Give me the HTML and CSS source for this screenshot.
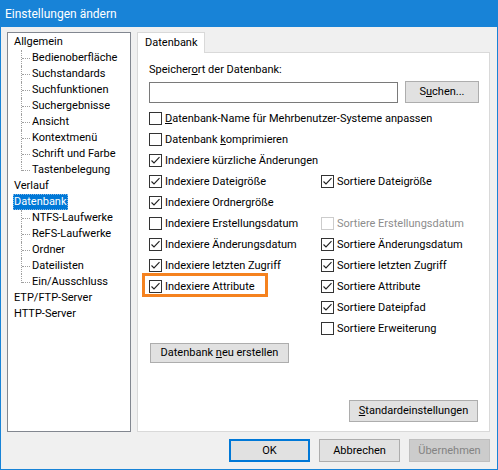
FILE: index.html
```html
<!DOCTYPE html>
<html lang="de">
<head>
<meta charset="utf-8">
<title>Einstellungen ändern</title>
<link rel="stylesheet" href="styles.css">
</head>
<body>
<div class="window">
  <div class="titlebar">Einstellungen ändern</div>
  <div class="main">
    <div class="tree">
      <div class="node"><span class="label">Allgemein</span></div>
      <ul class="children">
        <li>Bedienoberfläche</li>
        <li>Suchstandards</li>
        <li>Suchfunktionen</li>
        <li>Suchergebnisse</li>
        <li>Ansicht</li>
        <li>Kontextmenü</li>
        <li>Schrift und Farbe</li>
        <li>Tastenbelegung</li>
      </ul>
      <div class="node"><span class="label">Verlauf</span></div>
      <div class="node"><span class="label selected">Datenbank</span></div>
      <ul class="children">
        <li>NTFS-Laufwerke</li>
        <li>ReFS-Laufwerke</li>
        <li>Ordner</li>
        <li>Dateilisten</li>
        <li>Ein/Ausschluss</li>
      </ul>
      <div class="node"><span class="label">ETP/FTP-Server</span></div>
      <div class="node"><span class="label">HTTP-Server</span></div>
    </div>
    <div class="tabs">
      <div class="tabstrip"><div class="tab">Datenbank</div></div>
      <div class="panel">
        <div class="field-label">Speicher<u>o</u>rt der Datenbank:</div>
        <div class="path-row">
          <div class="input"></div>
          <div class="btn browse">S<u>u</u>chen...</div>
        </div>
        <div class="options">
          <div class="cb span"><span class="box"></span><span><u>D</u>atenbank-Name für Mehrbenutzer-Systeme anpassen</span></div>
          <div class="cb span"><span class="box"></span><span>Datenbank <u>k</u>omprimieren</span></div>
          <div class="cb span"><span class="box"><svg viewBox="0 0 11 11" class="check"><polyline points="1.5,5.5 4,8 9.5,2.2"/></svg></span><span>Indexiere kürzliche Änderungen</span></div>

          <div class="cb c1"><span class="box"><svg viewBox="0 0 11 11" class="check"><polyline points="1.5,5.5 4,8 9.5,2.2"/></svg></span><span>Indexiere Dateigröße</span></div>
          <div class="cb c2"><span class="box"><svg viewBox="0 0 11 11" class="check"><polyline points="1.5,5.5 4,8 9.5,2.2"/></svg></span><span>Sortiere Dateigröße</span></div>

          <div class="cb c1"><span class="box"><svg viewBox="0 0 11 11" class="check"><polyline points="1.5,5.5 4,8 9.5,2.2"/></svg></span><span>Indexiere Ordnergröße</span></div>

          <div class="cb c1"><span class="box"></span><span>Indexiere Erstellungsdatum</span></div>
          <div class="cb c2 disabled"><span class="box"></span><span>Sortiere Erstellungsdatum</span></div>

          <div class="cb c1"><span class="box"><svg viewBox="0 0 11 11" class="check"><polyline points="1.5,5.5 4,8 9.5,2.2"/></svg></span><span>Indexiere Änderungsdatum</span></div>
          <div class="cb c2"><span class="box"><svg viewBox="0 0 11 11" class="check"><polyline points="1.5,5.5 4,8 9.5,2.2"/></svg></span><span>Sortiere Änderungsdatum</span></div>

          <div class="cb c1"><span class="box"><svg viewBox="0 0 11 11" class="check"><polyline points="1.5,5.5 4,8 9.5,2.2"/></svg></span><span>Indexiere letzten Zugriff</span></div>
          <div class="cb c2"><span class="box"><svg viewBox="0 0 11 11" class="check"><polyline points="1.5,5.5 4,8 9.5,2.2"/></svg></span><span>Sortiere letzten Zugriff</span></div>

          <div class="cb c1 marked"><span class="box"><svg viewBox="0 0 11 11" class="check"><polyline points="1.5,5.5 4,8 9.5,2.2"/></svg></span><span>Indexiere Attribute</span><span class="highlight"></span></div>
          <div class="cb c2"><span class="box"><svg viewBox="0 0 11 11" class="check"><polyline points="1.5,5.5 4,8 9.5,2.2"/></svg></span><span>Sortiere Attribute</span></div>

          <div class="cb c2"><span class="box"><svg viewBox="0 0 11 11" class="check"><polyline points="1.5,5.5 4,8 9.5,2.2"/></svg></span><span>Sortiere Dateipfad</span></div>
          <div class="cb c2"><span class="box"></span><span>Sortiere Erweiterung</span></div>
        </div>
        <div class="btn rebuild">Datenbank <u>n</u>eu erstellen</div>
        <div class="btn defaults"><u>S</u>tandardeinstellungen</div>
      </div>
    </div>
  </div>
  <div class="footer">
    <div class="btn dlg default">OK</div>
    <div class="btn dlg">Abbrechen</div>
    <div class="btn dlg off">Übernehmen</div>
  </div>
</div>
</body>
</html>
```

FILE: styles.css
```css
* { box-sizing: border-box; }

html, body {
  margin: 0;
  padding: 0;
  background: #ffffff;
}

body {
  font-family: Roboto, "Liberation Sans", sans-serif;
  font-size: 11px;
  color: #000;
}

.window {
  width: 498px;
  height: 470px;
  border: 1px solid #1883d7;
  background: #f0f0f0;
  display: flex;
  flex-direction: column;
}

.titlebar {
  height: 26px;
  line-height: 26px;
  background: #1883d7;
  color: #fff;
  font-size: 12px;
  padding-left: 4px;
  flex: none;
}

.main {
  display: flex;
  gap: 6px;
  padding: 5px 7px 0 6px;
  height: 405px;
  flex: none;
}

/* tree */
.tree {
  width: 124px;
  height: 400px;
  background: #fff;
  border: 1px solid #828790;
  padding: 1px 0 0 5px;
  flex: none;
}

.node {
  height: 16px;
  line-height: 16px;
}

.label {
  display: inline-block;
  padding: 0 1px;
  height: 16px;
  line-height: 16px;
}

.label.selected {
  background: #0078d7;
  color: #fff;
  outline: 1px dotted #7fb6e8;
  outline-offset: -1px;
}

.children {
  list-style: none;
  margin: 0 0 0 8px;
  padding: 0;
}

.children li {
  position: relative;
  height: 16px;
  line-height: 16px;
  padding-left: 11px;
}

.children li::before {
  content: "";
  position: absolute;
  left: 0;
  top: 0;
  height: 16px;
  border-left: 1px dotted #a0a0a0;
}

.children li:last-child::before {
  height: 9px;
}

.children li::after {
  content: "";
  position: absolute;
  left: 1px;
  top: 8px;
  width: 8px;
  border-top: 1px dotted #a0a0a0;
}

/* tabs */
.tabs {
  flex: 1;
  height: 400px;
  display: flex;
  flex-direction: column;
}

.tabstrip {
  display: flex;
  height: 20px;
  flex: none;
}

.tab {
  position: relative;
  z-index: 1;
  width: 68px;
  height: 21px;
  background: #fff;
  border: 1px solid #d9d9d9;
  border-bottom: none;
  padding-left: 7px;
  line-height: 20px;
}

.panel {
  flex: 1;
  background: #fff;
  border: 1px solid #d9d9d9;
  padding: 9px 10px 9px 11px;
  display: flex;
  flex-direction: column;
}

.field-label {
  height: 16px;
  line-height: 16px;
}

.path-row {
  display: flex;
  gap: 7px;
  margin-top: 3px;
  align-items: flex-start;
}

.input {
  flex: 1;
  height: 21px;
  margin-top: 1px;
  border: 1px solid #7a7a7a;
  background: #fff;
}

.btn {
  background: #e1e1e1;
  border: 1px solid #adadad;
  text-align: center;
  white-space: nowrap;
}

.browse {
  width: 74px;
  height: 22px;
  line-height: 20px;
}

.options {
  display: grid;
  grid-template-columns: 172px 1fr;
  grid-auto-rows: 21px;
  margin-top: 5px;
}

.cb {
  position: relative;
  display: flex;
  align-items: center;
  gap: 3px;
  white-space: nowrap;
  line-height: 16px;
}

.cb.span { grid-column: 1 / -1; }
.cb.c1 { grid-column: 1; }
.cb.c2 { grid-column: 2; }

.box {
  width: 13px;
  height: 13px;
  flex: none;
  border: 1px solid #333;
  background: #fff;
  display: flex;
}

.check {
  width: 11px;
  height: 11px;
  fill: none;
  stroke: #202020;
  stroke-width: 1.1;
}

.cb.disabled { color: #8d8d8d; }
.cb.disabled .box { border-color: #cccccc; }

.highlight {
  position: absolute;
  left: -7px;
  top: -3px;
  width: 126px;
  height: 24px;
  border: 3px solid #f5821f;
}

.rebuild {
  align-self: flex-start;
  margin: 4px 0 0 1px;
  width: 139px;
  height: 20px;
  line-height: 18px;
}

.defaults {
  align-self: flex-end;
  margin: auto 1px 0 0;
  width: 129px;
  height: 22px;
  line-height: 20px;
}

/* footer */
.footer {
  display: flex;
  justify-content: flex-end;
  gap: 9px;
  padding: 7px 7px 0 0;
}

.dlg {
  width: 81px;
  height: 23px;
  line-height: 21px;
}

.dlg.default {
  border-color: #0078d7;
  box-shadow: inset 0 0 0 1px #0078d7;
}

.dlg.off {
  background: #cccccc;
  border-color: #bfbfbf;
  color: #838383;
}
```
